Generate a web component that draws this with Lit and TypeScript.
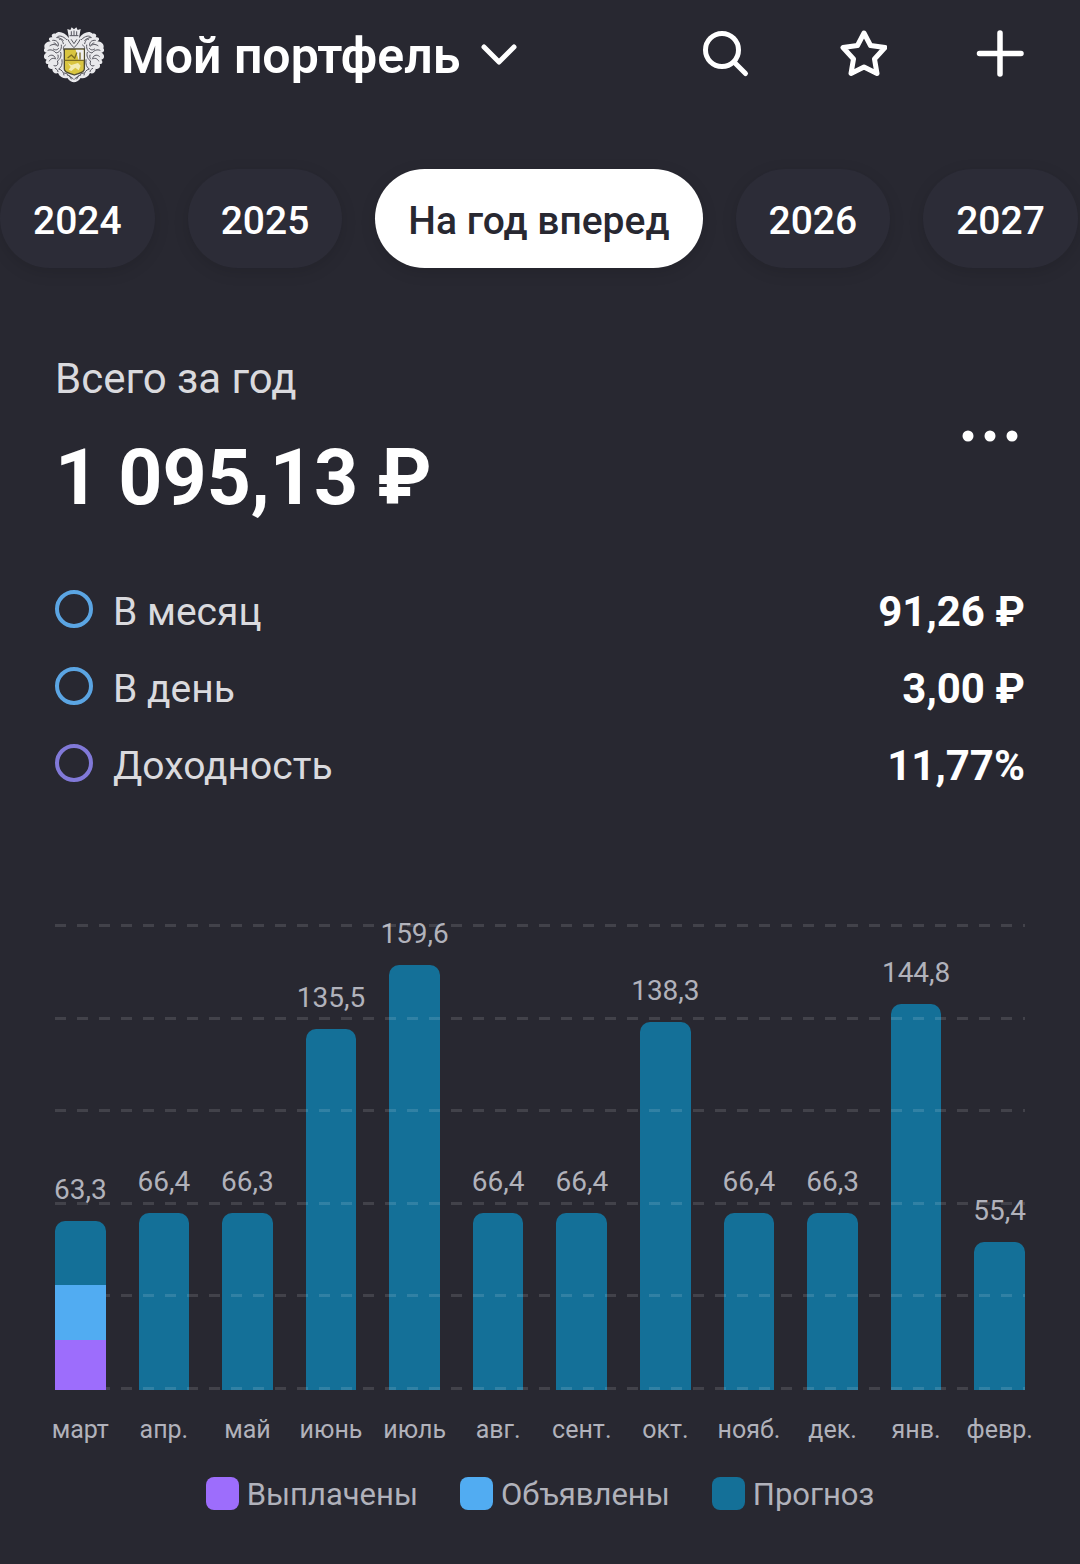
import { LitElement, html, css, svg } from "lit";
import { customElement, property, state } from "lit/decorators.js";
import { classMap } from "lit/directives/class-map.js";
import { styleMap } from "lit/directives/style-map.js";

type Kind = "paid" | "declared" | "forecast";

interface Segment {
  kind: Kind;
  value: number;
}

interface Month {
  name: string;
  total: number;
  // top to bottom; a plain forecast bar when omitted
  segments?: Segment[];
}

const PERIODS = ["2024", "2025", "На год вперед", "2026", "2027"];

const MONTHS: Month[] = [
  {
    name: "март",
    total: 63.3,
    segments: [
      { kind: "forecast", value: 23.7 },
      { kind: "declared", value: 20.8 },
      { kind: "paid", value: 18.8 },
    ],
  },
  { name: "апр.", total: 66.4 },
  { name: "май", total: 66.3 },
  { name: "июнь", total: 135.5 },
  { name: "июль", total: 159.6 },
  { name: "авг.", total: 66.4 },
  { name: "сент.", total: 66.4 },
  { name: "окт.", total: 138.3 },
  { name: "нояб.", total: 66.4 },
  { name: "дек.", total: 66.3 },
  { name: "янв.", total: 144.8 },
  { name: "февр.", total: 55.4 },
];

const LEGEND: { kind: Kind; label: string }[] = [
  { kind: "paid", label: "Выплачены" },
  { kind: "declared", label: "Объявлены" },
  { kind: "forecast", label: "Прогноз" },
];

const AXIS_MAX = 175;

const format = (n: number) => n.toFixed(1).replace(".", ",");

// one half of the mantling, mirrored for the other side
const mantling = svg`
  <path fill="#e9e9ec" d="M74 32 C62 16 44 10 34 20 C26 17 20 24 25 31 C14 28 11 39 20 43
    C6 44 -2 54 2 64 C-3 70 1 77 8 77 C-3 82 -3 95 8 98 C2 104 5 112 13 111 C9 121 16 128 25 125
    C24 136 34 142 42 138 C48 152 62 156 70 153 C76 162 84 166 90 166 L90 30 Z" />
  <g fill="none" stroke="#55555e" stroke-width="3" stroke-linecap="round">
    <path d="M68 38 C56 26 44 24 38 32 C48 30 56 40 58 50" />
    <path d="M58 40 C52 34 48 34 46 38" />
    <path d="M26 40 C38 38 46 48 42 58 C36 52 26 50 18 56" />
    <path d="M30 48 C34 48 36 50 37 53" />
    <path d="M52 54 C54 68 46 76 36 78 C30 70 20 66 12 70" />
    <path d="M44 64 C40 70 34 70 28 66" />
    <path d="M14 88 C22 80 34 86 34 96 C28 92 20 94 16 102" />
    <path d="M50 76 C54 86 48 98 40 102 C44 110 40 120 30 116" />
    <path d="M42 84 C44 90 42 94 40 96" />
    <path d="M54 98 C56 112 52 122 44 126 C54 128 60 138 60 144" />
    <path d="M34 124 C38 126 42 130 42 134" />
    <path d="M64 54 C58 58 56 64 60 70" />
    <path d="M60 138 C70 138 76 146 82 156" />
    <path d="M70 144 C76 146 82 150 88 156" />
  </g>
`;

const crest = html`
  <svg class="crest" viewBox="0 0 180 168" aria-hidden="true">
    ${mantling}
    <g transform="translate(180 0) scale(-1 1)">${mantling}</g>
    <path fill="#e9e9ec" d="M70 6 L79 9 L83 1 L90 7 L97 1 L101 9 L110 6 L105 34 L75 34 Z" />
    <g fill="none" stroke="#55555e" stroke-width="3">
      <path d="M78 26 H102 M82 14 V24 M90 12 V24 M98 14 V24" />
      <path d="M72 38 C78 50 84 56 90 62 C96 56 102 50 108 38" />
      <path d="M82 38 L90 50 L98 38" />
    </g>
    <path
      fill="#d9c540"
      stroke="#4d4a30"
      stroke-width="4"
      d="M61 66 H121 V126 C121 138 104 138 91 144 C78 138 61 138 61 126 Z"
    />
    <path fill="#eeeef0" d="M95 68 H119 V100 H104 Z" />
    <path fill="none" stroke="#7c6d22" stroke-width="4" d="M63 100 H119 M72 92 L82 84 L92 94 L98 78 M108 78 V96" />
    <path fill="#f2ecb4" d="M72 108 L82 114 L102 108 L110 116 L104 130 L94 122 L82 132 L74 128 L80 120 Z" />
  </svg>
`;

@customElement("portfolio-header")
export class PortfolioHeader extends LitElement {
  static override styles = css`
    :host {
      display: flex;
      align-items: center;
      justify-content: space-between;
      height: 110px;
      padding: 0 56px 0 44px;
    }

    button {
      display: flex;
      align-items: center;
      padding: 0;
      border: none;
      background: none;
      color: inherit;
      font: inherit;
      cursor: pointer;
    }

    h1 {
      margin: 0;
      padding-top: 2px;
      font-size: 50px;
      line-height: 60px;
      font-weight: 600;
      white-space: nowrap;
    }

    .title {
      gap: 17px;
    }

    svg {
      display: block;
      fill: none;
      stroke: currentColor;
      stroke-width: 5;
      stroke-linecap: round;
      stroke-linejoin: round;
    }

    .crest {
      width: 60px;
      height: 56px;
      stroke: none;
    }

    .chevron {
      width: 36px;
      height: 24px;
      margin-left: 4px;
    }

    .actions {
      display: flex;
      gap: 89px;
    }

    .icon {
      width: 48px;
      height: 50px;
    }
  `;

  override render() {
    return html`
      <button class="title" type="button">
        ${crest}
        <h1>Мой портфель</h1>
        <svg class="chevron" viewBox="0 0 36 24" aria-hidden="true">
          <path d="M3 4 L18 19 L33 4" />
        </svg>
      </button>
      <div class="actions">
        <button type="button" aria-label="Поиск">
          <svg class="icon" viewBox="0 0 48 50">
            <circle cx="20" cy="20" r="16.5" />
            <path d="M32 32 L43.5 43.5" />
          </svg>
        </button>
        <button type="button" aria-label="Избранное">
          <svg class="icon" viewBox="0 0 48 50">
            <path
              d="M25 3 L31.5 15.5 L46 17.5 L35.5 29 L38 43.5 L25 37 L12 43.5 L14.5 29 L4 17.5 L18.5 15.5 Z"
            />
          </svg>
        </button>
        <button type="button" aria-label="Добавить">
          <svg class="icon" viewBox="0 0 48 50">
            <path stroke-width="5.5" d="M24 3 V44 M3.5 23.5 H45" />
          </svg>
        </button>
      </div>
    `;
  }
}

@customElement("period-tabs")
export class PeriodTabs extends LitElement {
  static override styles = css`
    :host {
      display: block;
    }

    nav {
      display: flex;
      gap: 33px;
      padding: 59px 0 40px;
      overflow: hidden;
    }

    button {
      flex: none;
      height: 99px;
      padding: 4px 33px 0;
      border: none;
      border-radius: 50px;
      background: var(--color-surface);
      color: var(--color-text);
      box-shadow: 0 4px 16px rgba(0, 0, 0, 0.12);
      font: 500 39px / 48px var(--font-sans);
      white-space: nowrap;
      cursor: pointer;
    }

    .active {
      background: #fff;
      color: var(--color-bg);
    }
  `;

  @state()
  private selected = "На год вперед";

  override render() {
    return html`
      <nav>
        ${PERIODS.map(
          (p) => html`
            <button
              type="button"
              class=${classMap({ active: p === this.selected })}
              aria-pressed=${p === this.selected}
              @click=${() => (this.selected = p)}
            >
              ${p}
            </button>
          `
        )}
      </nav>
    `;
  }
}

@customElement("income-summary")
export class IncomeSummary extends LitElement {
  static override styles = css`
    :host {
      display: block;
      padding: 47px 55px 0;
    }

    .head {
      display: flex;
      align-items: center;
      justify-content: space-between;
    }

    .caption {
      margin: 0;
      color: var(--color-label);
      font-size: 42px;
      line-height: 48px;
      font-weight: 400;
    }

    .total {
      margin: 27px 0 0;
      font-size: 77px;
      line-height: 96px;
      font-weight: 700;
    }

    .more {
      padding: 0 6px 10px;
      border: none;
      background: none;
      color: inherit;
      cursor: pointer;
    }

    .more svg {
      display: block;
      width: 58px;
      height: 12px;
      fill: currentColor;
    }

    dl {
      margin: 47px 0 0;
    }

    .row {
      display: flex;
      align-items: center;
      height: 77px;
    }

    .ring {
      box-sizing: border-box;
      width: 38px;
      height: 38px;
      margin: 0 20px 6px 0;
      border: 4px solid #5ba5e3;
      border-radius: 50%;
    }

    .ring.violet {
      border-color: #8179d8;
    }

    dt {
      flex: 1;
      color: var(--color-label);
      font-size: 39px;
    }

    dd {
      margin: 0;
      font-size: 42px;
      font-weight: 700;
    }
  `;

  override render() {
    return html`
      <div class="head">
        <div>
          <h2 class="caption">Всего за год</h2>
          <p class="total">1 095,13 ₽</p>
        </div>
        <button class="more" type="button" aria-label="Ещё">
          <svg viewBox="0 0 58 12">
            <circle cx="7" cy="6" r="5.5" />
            <circle cx="29" cy="6" r="5.5" />
            <circle cx="51" cy="6" r="5.5" />
          </svg>
        </button>
      </div>
      <dl>
        ${this.row("В месяц", "91,26 ₽")}
        ${this.row("В день", "3,00 ₽")}
        ${this.row("Доходность", "11,77%", true)}
      </dl>
    `;
  }

  private row(label: string, value: string, violet = false) {
    return html`
      <div class="row">
        <span class=${classMap({ ring: true, violet })}></span>
        <dt>${label}</dt>
        <dd>${value}</dd>
      </div>
    `;
  }
}

@customElement("income-chart")
export class IncomeChart extends LitElement {
  static override styles = css`
    :host {
      display: block;
      padding: 120px 55px 50px;
      color: var(--color-muted);
    }

    .plot {
      position: relative;
      height: 466px;
    }

    .columns,
    .months {
      display: grid;
      grid-template-columns: repeat(12, minmax(0, 1fr));
      column-gap: 33px;
    }

    .column {
      display: flex;
      flex-direction: column;
      align-items: center;
      justify-content: flex-end;
      height: 466px;
    }

    .value {
      flex: none;
      margin-bottom: 15px;
      font-size: 28px;
      line-height: 32px;
    }

    .bar {
      display: flex;
      flex: none;
      flex-direction: column;
      width: 100%;
      border-radius: 10px 10px 0 0;
      overflow: hidden;
    }

    /* the dashes show through the forecast, not through the other two */
    .lines {
      position: absolute;
      inset: 0;
      z-index: 1;
      display: flex;
      flex-direction: column;
      justify-content: space-between;
      pointer-events: none;
    }

    .line {
      height: 3px;
      background: repeating-linear-gradient(
        to right,
        rgba(255, 255, 255, 0.12) 0 11px,
        transparent 11px 22px
      );
    }

    .forecast {
      background: #147098;
    }

    .declared {
      background: #51acf2;
    }

    .paid {
      background: #9d6dfc;
    }

    .bar .declared,
    .bar .paid {
      position: relative;
      z-index: 2;
    }

    .months {
      margin-top: 24px;
      font-size: 25px;
      line-height: 32px;
    }

    .month {
      display: flex;
      justify-content: center;
      white-space: nowrap;
    }

    .legend {
      display: flex;
      flex-wrap: wrap;
      justify-content: center;
      gap: 16px 42px;
      margin: 30px 0 0;
      padding: 0;
      list-style: none;
      font-size: 31px;
      line-height: 36px;
    }

    .legend li {
      display: flex;
      align-items: flex-start;
      gap: 8px;
      padding-top: 1px;
    }

    .swatch {
      width: 33px;
      height: 33px;
      border-radius: 8px;
    }
  `;

  @property({ attribute: false })
  months: Month[] = [];

  override render() {
    return html`
      <div class="plot">
        <div class="columns">${this.months.map((m) => this.column(m))}</div>
        <div class="lines">
          ${Array.from({ length: 6 }, () => html`<div class="line"></div>`)}
        </div>
      </div>
      <div class="months">
        ${this.months.map((m) => html`<span class="month">${m.name}</span>`)}
      </div>
      <ul class="legend">
        ${LEGEND.map(
          (l) => html`<li><span class="swatch ${l.kind}"></span>${l.label}</li>`
        )}
      </ul>
    `;
  }

  private column(m: Month) {
    const segments = m.segments ?? [{ kind: "forecast", value: m.total }];
    return html`
      <div class="column">
        <span class="value">${format(m.total)}</span>
        <div class="bar" style=${styleMap({ height: `${(m.total / AXIS_MAX) * 100}%` })}>
          ${segments.map(
            (s) => html`<div class=${s.kind} style=${styleMap({ flexGrow: String(s.value) })}></div>`
          )}
        </div>
      </div>
    `;
  }
}

@customElement("app-root")
export class AppRoot extends LitElement {
  static override styles = css`
    :host {
      --color-bg: #282831;
      --color-surface: #2c2c37;
      --color-text: #fff;
      --color-label: #dadade;
      --color-muted: #b1b2bb;
      --font-sans: Roboto, "Liberation Sans", sans-serif;

      display: block;
      min-height: 100vh;
      background: var(--color-bg);
      color: var(--color-text);
      font-family: var(--font-sans);
    }
  `;

  override render() {
    return html`
      <portfolio-header></portfolio-header>
      <period-tabs></period-tabs>
      <main>
        <income-summary></income-summary>
        <income-chart .months=${MONTHS}></income-chart>
      </main>
    `;
  }
}
